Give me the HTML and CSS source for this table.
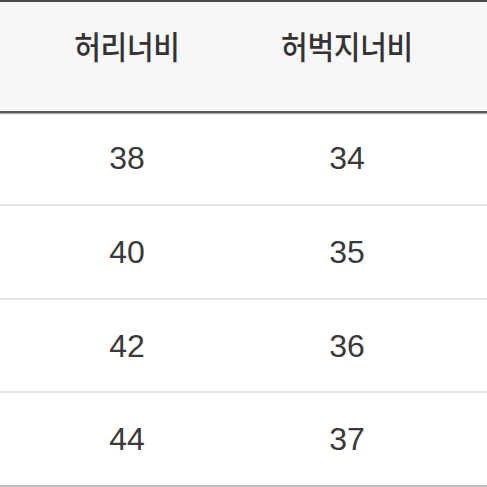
FILE: index.html
```html
<!DOCTYPE html>
<html lang="ko">
<head>
<meta charset="utf-8">
<link rel="stylesheet" href="styles.css">
</head>
<body>
<div class="table">
  <div class="row head">
    <div class="cell">허리너비</div>
    <div class="cell">허벅지너비</div>
  </div>
  <div class="row">
    <div class="cell">38</div>
    <div class="cell">34</div>
  </div>
  <div class="row">
    <div class="cell">40</div>
    <div class="cell">35</div>
  </div>
  <div class="row">
    <div class="cell">42</div>
    <div class="cell">36</div>
  </div>
  <div class="row last">
    <div class="cell">44</div>
    <div class="cell">37</div>
  </div>
</div>
</body>
</html>
```

FILE: styles.css
```css
html, body {
  margin: 0;
  padding: 0;
  background: #ffffff;
}
.table {
  width: 487px;
  height: 487px;
  display: flex;
  flex-direction: column;
  overflow: hidden;
}
.row {
  display: grid;
  grid-template-columns: 220px 220px 1fr;
  padding-left: 17px;
  height: 92px;
  align-items: center;
  border-bottom: 2px solid #e4e4e4;
  font-family: "Liberation Sans", Arial, sans-serif;
  font-size: 32px;
  color: #3a3a3a;
  box-sizing: content-box;
}
.row.head {
  height: 109px;
  border-top: 2px solid #4a4a4a;
  border-bottom: 2px solid #5a5a5a;
  box-shadow: 0 1px 1px #aaaaaa;
  background: #f7f7f7;
  align-items: start;
  font-family: "Noto Sans CJK KR", "Noto Sans", sans-serif;
  font-weight: 500;
  font-size: 29px;
  color: #333333;
}
.row.head .cell {
  padding-top: 28px;
  line-height: 1;
  letter-spacing: -0.3px;
  transform: scaleY(1.08);
}
.row.last {
  border-bottom-color: #bdbdbd;
}
.cell {
  text-align: center;
  line-height: 1;
}
```
